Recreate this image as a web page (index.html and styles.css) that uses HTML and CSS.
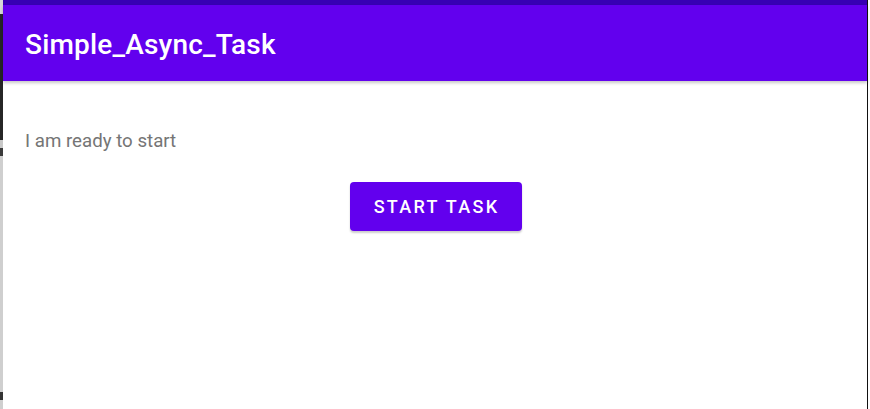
FILE: index.html
```html
<!DOCTYPE html>
<html>
<head>
<meta charset="utf-8">
<link rel="stylesheet" href="styles.css">
</head>
<body>
<div class="frame">
  <div class="edge-left"></div>
  <div class="app">
    <div class="status"></div>
    <header class="appbar"><h1 class="title">Simple_Async_Task</h1></header>
    <main class="content">
      <p class="msg">I am ready to start</p>
      <div class="btn-row"><button class="btn">START TASK</button></div>
    </main>
  </div>
  <div class="edge-right"></div>
</div>
</body>
</html>
```
FILE: styles.css
```css
html, body { margin: 0; padding: 0; background: #fff; }
body { width: 870px; height: 409px; overflow: hidden; font-family: Roboto, "Noto Sans", sans-serif; }
.frame { display: flex; height: 409px; }
.edge-left {
  width: 3px;
  background: linear-gradient(to bottom, #d8d8d8 0, #d8d8d8 14px, #262626 14px, #262626 140px, #c8c8c8 140px, #c8c8c8 148px, #3a3a3a 148px, #3a3a3a 156px, #cfcfcf 156px, #cfcfcf 392px, #333 392px, #333 400px, #cfcfcf 400px);
}
.app { width: 864px; display: flex; flex-direction: column; background: #fff; }
.status { height: 5px; background: #3700b3; }
.appbar {
  height: 76px; background: #6200ee; display: flex; align-items: center;
  padding-left: 22px; box-shadow: 0 2px 3px rgba(0,0,0,0.22); position: relative; z-index: 1;
}
.title { margin: 0; color: #fff; font-size: 28px; font-weight: 500; letter-spacing: 0.18px; padding-top: 3px; }
.content { padding: 49px 22px 0; }
.msg { margin: 0; color: #757575; font-size: 18.7px; line-height: 22px; }
.btn-row { display: flex; justify-content: center; margin-top: 30px; padding-left: 2px; }
.btn {
  width: 172px; height: 49px; border: none; border-radius: 4px; background: #6200ee; color: #fff;
  font-family: Roboto, sans-serif; font-size: 18px; font-weight: 500; letter-spacing: 2.3px;
  box-shadow: 0 2px 2px rgba(0,0,0,0.2); padding: 0 0 0 1px;
}
.edge-right { width: 1px; background: #111; }
```
